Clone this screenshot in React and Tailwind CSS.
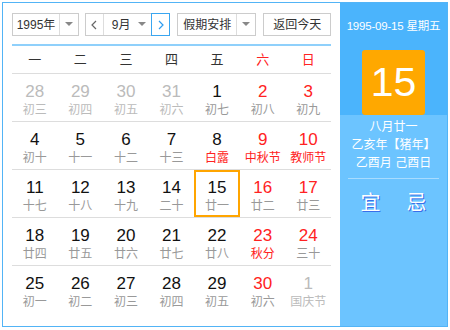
import React from "react";

const weekdays = ["一", "二", "三", "四", "五", "六", "日"];

// t: 0 normal, 1 other month, 2 weekend/holiday red
const rows = [
  [["28", "初三", 1], ["29", "初四", 1], ["30", "初五", 1], ["31", "初六", 1], ["1", "初七", 0], ["2", "初八", 2], ["3", "初九", 2]],
  [["4", "初十", 0], ["5", "十一", 0], ["6", "十二", 0], ["7", "十三", 0], ["8", "白露", 0, true], ["9", "中秋节", 2, true], ["10", "教师节", 2, true]],
  [["11", "十七", 0], ["12", "十八", 0], ["13", "十九", 0], ["14", "二十", 0], ["15", "廿一", 0, false, true], ["16", "廿二", 2], ["17", "廿三", 2]],
  [["18", "廿四", 0], ["19", "廿五", 0], ["20", "廿六", 0], ["21", "廿七", 0], ["22", "廿八", 0], ["23", "秋分", 2, true], ["24", "三十", 2]],
  [["25", "初一", 0], ["26", "初二", 0], ["27", "初三", 0], ["28", "初四", 0], ["29", "初五", 0], ["30", "初六", 2], ["1", "国庆节", 1]],
];

const Caret = () => (
  <svg width="8" height="5" viewBox="0 0 8 5">
    <path d="M0 0 L8 0 L4 4 Z" fill="#888" />
  </svg>
);

function Select({ label, width, labelW }) {
  return (
    <div className={`flex h-full border border-[#ccc] bg-white ${width}`}>
      <div className={`flex items-center justify-center whitespace-nowrap text-[12px] text-[#333] ${labelW}`}>{label}</div>
      <div className="flex flex-1 items-center justify-center border-l border-[#ddd]">
        <Caret />
      </div>
    </div>
  );
}

function Cell({ d }) {
  const [num, lunar, t, redLunar, selected] = d;
  const numColor = t === 1 ? "text-[#bbb]" : t === 2 ? "text-[#f22]" : "text-[#111]";
  const lunarColor = redLunar ? "text-[#f22]" : t === 1 ? "text-[#bbb]" : "text-[#999]";
  return (
    <div className="flex items-center justify-center">
      <div
        className={`flex h-[47px] w-full flex-col items-center ${
          selected ? "border-2 border-[#ffa500] pt-[6px]" : "pt-[8px]"
        }`}
      >
        <div className={`text-[17px] leading-[20px] ${numColor}`}>{num}</div>
        <div className={`text-[12px] leading-[16px] ${lunarColor}`}>{lunar}</div>
      </div>
    </div>
  );
}

export default function App() {
  return (
    <div className="h-[330px] w-[450px] bg-white pl-[2px] pt-[2px]" style={{ fontFamily: '"Liberation Sans", "Noto Sans CJK SC", sans-serif' }}>
      <div className="flex h-[325px] w-[446px] border border-[#52b4f6]">
        {/* 左侧日历 */}
        <div className="w-[337px] px-[9px] pt-[10px]">
          <div className="flex h-[23px] items-stretch">
            <Select label="1995年" width="w-[67px]" labelW="w-[46px]" />
            <div className="ml-[6px] flex h-full w-[86px] border border-[#ccc]">
              <div className="flex w-[18px] items-center justify-center border-r border-[#ddd]">
                <svg width="6" height="10" viewBox="0 0 6 10"><path d="M5 1 L1 5 L5 9" stroke="#666" strokeWidth="1.2" fill="none" /></svg>
              </div>
              <div className="flex flex-1 items-center justify-between pl-[8px] pr-[5px]">
                <span className="whitespace-nowrap text-[12px] text-[#333]">9月</span>
                <Caret />
              </div>
              <div className="-my-px -mr-px flex w-[19px] items-center justify-center border border-[#3aa6f0]">
                <svg width="6" height="10" viewBox="0 0 6 10"><path d="M1 1 L5 5 L1 9" stroke="#2e9cf0" strokeWidth="1.2" fill="none" /></svg>
              </div>
            </div>
            <div className="ml-[7px]">
              <Select label="假期安排" width="w-[79px]" labelW="w-[58px]" />
            </div>
            <div className="ml-[7px] flex h-full w-[68px] items-center justify-center whitespace-nowrap border border-[#ccc] text-[12px] text-[#333]">
              返回今天
            </div>
          </div>
          <div className="mt-[8px] h-[2px] bg-[#8fd0fb]" />
          <div className="grid h-[28px] grid-cols-7 items-center border-b border-[#ddd]">
            {weekdays.map((w, i) => (
              <div key={w} className={`text-center text-[13px] ${i >= 5 ? "text-[#f22]" : "text-[#333]"}`}>
                {w}
              </div>
            ))}
          </div>
          {rows.map((r, i) => (
            <div key={i} className={`grid grid-cols-7 ${i < 4 ? "border-b border-[#ddd]" : ""}`}>
              {r.map((d, j) => (
                <Cell key={j} d={d} />
              ))}
            </div>
          ))}
        </div>

        {/* 右侧详情 */}
        <div className="flex flex-1 flex-col bg-[#6cc4ff] text-white">
          <div className="flex h-[112px] flex-col items-center bg-[#4bb4fc] pt-[15px]">
            <div className="whitespace-nowrap text-[11.5px] leading-[16px] tracking-[-0.2px]">1995-09-15 星期五</div>
            <div className="mt-[16px] flex h-[65px] w-[63px] items-center justify-center rounded-[3px] bg-[#ffa800] text-[41px] leading-none">
              15
            </div>
          </div>
          <div className="flex flex-col items-center pt-[3px] text-[12px] leading-[18px]">
            <div>八月廿一</div>
            <div>乙亥年【猪年】</div>
            <div>乙酉月 己酉日</div>
          </div>
          <div className="mx-[8px] mt-[6px] h-px bg-[#a8dcff]" />
          <div className="mt-[12px] flex justify-center gap-[26px] text-[20px] leading-[24px]" style={{ textShadow: "1px 1px 0 #3a6ee8" }}>
            <span>宜</span>
            <span>忌</span>
          </div>
        </div>
      </div>
    </div>
  );
}
